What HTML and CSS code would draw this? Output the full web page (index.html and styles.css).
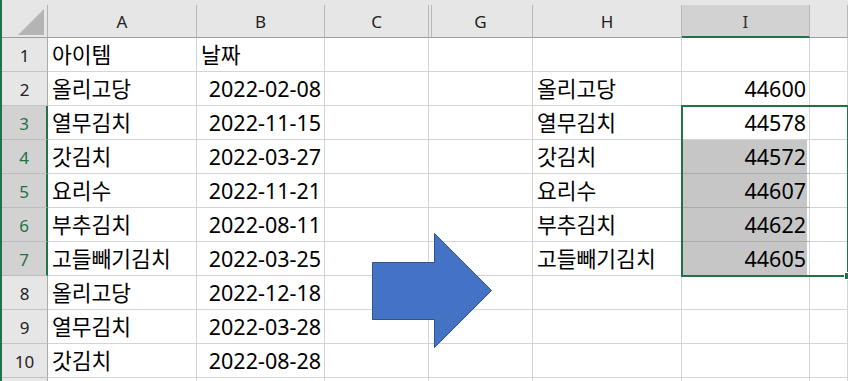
FILE: index.html
```html
<!DOCTYPE html>
<html lang="ko">
<head>
    <meta charset="UTF-8">
    <title>시트</title>
    <link rel="stylesheet" href="styles.css">
</head>
<body>
    <div class="sheet">
        <div class="top-strip"></div>

        <div class="corner"><span class="tri"></span></div>
        <div class="colhead">A</div>
        <div class="colhead">B</div>
        <div class="colhead">C</div>
        <div class="colhead hidden-left">G</div>
        <div class="colhead">H</div>
        <div class="colhead picked">I</div>
        <div class="colhead"></div>

        <div class="rowhead">1</div>
        <div class="cell">아이템</div>
        <div class="cell">날짜</div>
        <div class="cell"></div><div class="cell"></div><div class="cell"></div><div class="cell"></div><div class="cell"></div>

        <div class="rowhead">2</div>
        <div class="cell">올리고당</div>
        <div class="cell num">2022-02-08</div>
        <div class="cell"></div><div class="cell"></div>
        <div class="cell">올리고당</div>
        <div class="cell num">44600</div>
        <div class="cell"></div>

        <div class="rowhead on">3</div>
        <div class="cell">열무김치</div>
        <div class="cell num">2022-11-15</div>
        <div class="cell"></div><div class="cell"></div>
        <div class="cell">열무김치</div>
        <div class="cell num">44578</div>
        <div class="cell"></div>

        <div class="rowhead on">4</div>
        <div class="cell">갓김치</div>
        <div class="cell num">2022-03-27</div>
        <div class="cell"></div><div class="cell"></div>
        <div class="cell">갓김치</div>
        <div class="cell num shade">44572</div>
        <div class="cell"></div>

        <div class="rowhead on">5</div>
        <div class="cell">요리수</div>
        <div class="cell num">2022-11-21</div>
        <div class="cell"></div><div class="cell"></div>
        <div class="cell">요리수</div>
        <div class="cell num shade">44607</div>
        <div class="cell"></div>

        <div class="rowhead on">6</div>
        <div class="cell">부추김치</div>
        <div class="cell num">2022-08-11</div>
        <div class="cell"></div><div class="cell"></div>
        <div class="cell">부추김치</div>
        <div class="cell num shade">44622</div>
        <div class="cell"></div>

        <div class="rowhead on">7</div>
        <div class="cell">고들빼기김치</div>
        <div class="cell num">2022-03-25</div>
        <div class="cell"></div><div class="cell"></div>
        <div class="cell">고들빼기김치</div>
        <div class="cell num shade">44605</div>
        <div class="cell"></div>

        <div class="rowhead">8</div>
        <div class="cell">올리고당</div>
        <div class="cell num">2022-12-18</div>
        <div class="cell"></div><div class="cell"></div><div class="cell"></div><div class="cell"></div><div class="cell"></div>

        <div class="rowhead">9</div>
        <div class="cell">열무김치</div>
        <div class="cell num">2022-03-28</div>
        <div class="cell"></div><div class="cell"></div><div class="cell"></div><div class="cell"></div><div class="cell"></div>

        <div class="rowhead">10</div>
        <div class="cell">갓김치</div>
        <div class="cell num">2022-08-28</div>
        <div class="cell"></div><div class="cell"></div><div class="cell"></div><div class="cell"></div><div class="cell"></div>

        <div class="rowhead"></div>
        <div class="cell"></div><div class="cell"></div><div class="cell"></div><div class="cell"></div><div class="cell"></div><div class="cell"></div><div class="cell"></div>

        <!-- 선택 영역 I3:I7 -->
        <div class="selection"><span class="handle"></span></div>

        <!-- 오른쪽 화살표 도형 -->
        <svg class="arrow" width="122" height="117" viewBox="0 0 122 117">
            <polygon points="1.5,30.5 63.5,30.5 63.5,1.5 120.5,58.5 63.5,115.5 63.5,87.5 1.5,87.5"
                     fill="#4472c4" stroke="#2f528f" stroke-width="1"/>
        </svg>
    </div>
</body>
</html>
```

FILE: styles.css
```css
* {
    margin: 0;
    padding: 0;
    box-sizing: border-box;
}
html, body {
    width: 848px;
    height: 381px;
    overflow: hidden;
    background: #ffffff;
}
.sheet {
    position: relative;
    display: grid;
    grid-template-columns: 46px 149px 128px 104px 104px 149px 128px 1fr;
    grid-template-rows: 5px 33px repeat(11, 34px);
    border-left: 2px solid #217346;
    font-family: "Noto Sans", "Noto Sans CJK KR", sans-serif;
    color: #000000;
}
.top-strip {
    grid-column: 1 / -1;
    background: #e6e6e6;
}

/* 머리글 */
.corner, .colhead, .rowhead {
    background: #e6e6e6;
    color: #222222;
    font-size: 17px;
}
.corner {
    display: flex;
    justify-content: flex-end;
    align-items: flex-end;
    padding: 0 3px 2px 0;
    border-right: 1px solid #b1b1b1;
    border-bottom: 1px solid #9e9e9e;
}
.tri {
    width: 26px;
    height: 26px;
    background: #b4b4b4;
    clip-path: polygon(100% 0, 100% 100%, 0 100%);
}
.colhead {
    display: flex;
    justify-content: center;
    align-items: center;
    border-right: 1px solid #b8b8b8;
    border-bottom: 1px solid #9e9e9e;
    padding-top: 1px;
}
.colhead.hidden-left {
    box-shadow: inset 2px 0 0 #e6e6e6, inset 3px 0 0 #b8b8b8;
}
.colhead.picked {
    background: #d2d2d2;
    border-bottom: 2px solid #217346;
    color: #333333;
}
.rowhead {
    display: flex;
    justify-content: center;
    align-items: center;
    border-right: 1px solid #ababab;
    border-bottom: 1px solid #c4c4c4;
    padding-top: 1px;
}
.rowhead.on {
    background: #d2d2d2;
    color: #217346;
    border-right: 2px solid #217346;
    border-bottom-color: #bdbdbd;
}

/* 셀 */
.cell {
    border-right: 1px solid #d4d4d4;
    border-bottom: 1px solid #d4d4d4;
    font-size: 21.5px;
    line-height: 33px;
    padding: 0 3px 0 4px;
    white-space: nowrap;
    overflow: hidden;
}
.cell.num {
    text-align: right;
}
.cell.shade {
    background: #c6c6c6;
    border-bottom-color: #ababab;
    box-shadow: inset -2px 0 0 #ffffff;
}

/* 선택 테두리: 그리드 영역 위에 겹쳐 그림 */
.selection {
    position: absolute;
    grid-column: 7;
    grid-row: 5 / 10;
    inset: -1px;
    border: 2px solid #217346;
    pointer-events: none;
    z-index: 1;
}
.handle {
    position: absolute;
    right: -5px;
    bottom: -5px;
    width: 8px;
    height: 8px;
    background: #217346;
    border: 1px solid #ffffff;
}

.arrow {
    position: absolute;
    left: 369px;
    top: 232px;
    z-index: 2;
}
```
